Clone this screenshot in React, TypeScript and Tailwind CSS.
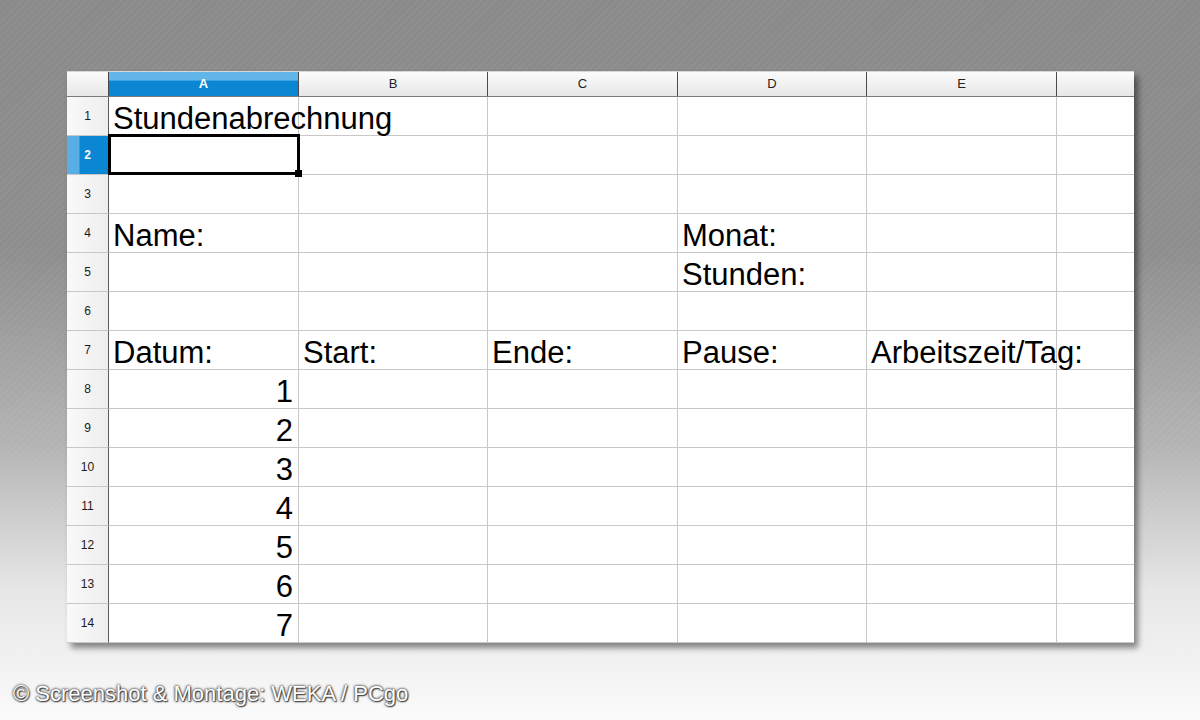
import React from 'react'

const COLS = ['A', 'B', 'C', 'D', 'E', '']

type Cell = { text: string; align?: 'left' | 'right'; overflow?: boolean }

const DATA: Record<number, Record<number, Cell>> = {
  1: { 0: { text: 'Stundenabrechnung', overflow: true } },
  4: { 0: { text: 'Name:' }, 3: { text: 'Monat:' } },
  5: { 3: { text: 'Stunden:' } },
  7: {
    0: { text: 'Datum:' },
    1: { text: 'Start:' },
    2: { text: 'Ende:' },
    3: { text: 'Pause:' },
    4: { text: 'Arbeitszeit/Tag:', overflow: true },
  },
  8: { 0: { text: '1', align: 'right' } },
  9: { 0: { text: '2', align: 'right' } },
  10: { 0: { text: '3', align: 'right' } },
  11: { 0: { text: '4', align: 'right' } },
  12: { 0: { text: '5', align: 'right' } },
  13: { 0: { text: '6', align: 'right' } },
  14: { 0: { text: '7', align: 'right' } },
}

const ROWS = Array.from({ length: 14 }, (_, i) => i + 1)

function ColHeader({ label, index }: { label: string; index: number }) {
  if (index === 0) {
    return (
      <div className="h-[24px] flex items-center justify-center border-r border-[#4a4a4a] bg-[linear-gradient(to_bottom,#63b6ea_0%,#63b6ea_35%,#0a86d3_36%,#0a86d3_100%)] text-[13px] font-bold text-white">
        {label}
      </div>
    )
  }
  return (
    <div
      className={
        'h-[24px] flex items-center justify-center bg-[linear-gradient(to_bottom,#fbfbfb,#e7e7e7)] text-[13px] text-[#222] ' +
        (index < 5 ? 'border-r border-[#4a4a4a]' : '')
      }
    >
      {label}
    </div>
  )
}

function RowHeader({ n }: { n: number }) {
  const active = n === 2
  return (
    <div
      className={
        'h-[39px] flex items-center justify-center border-b border-r text-[12px] ' +
        (active
          ? 'border-[#c8c8c8] border-r-[#5a5a5a] bg-[linear-gradient(to_right,#5aaee6_0%,#5aaee6_30%,#0a86d3_31%,#0a86d3_100%)] text-white font-bold'
          : 'border-[#c8c8c8] border-r-[#5a5a5a] bg-[linear-gradient(to_right,#f9f9f9,#eeeeee)] text-[#1a1a1a]')
      }
    >
      {n}
    </div>
  )
}

export default function App() {
  return (
    <div
      className="w-[1200px] h-[720px] flex flex-col overflow-hidden bg-[repeating-linear-gradient(135deg,rgba(255,255,255,0.035)_0px,rgba(255,255,255,0.035)_2px,transparent_2px,transparent_5px),linear-gradient(to_bottom,#8a8a8a_0%,#8e8e8e_35%,#b4b4b4_62%,#e6e6e6_82%,#fbfbfb_100%)]"
      style={{ fontFamily: '"Liberation Sans", Arial, sans-serif' }}
    >
      <div className="ml-[67px] mt-[71px] w-[1067px] bg-white border-t border-[#d6d6d6] shadow-[4px_5px_6px_rgba(0,0,0,0.45)]">
        <div className="grid grid-cols-[42px_190px_189px_190px_189px_190px_77px]">
          <div className="h-[24px] border-r border-[#4a4a4a] bg-[linear-gradient(to_bottom,#fbfbfb,#e7e7e7)]" />
          {COLS.map((c, i) => (
            <ColHeader key={i} label={c} index={i} />
          ))}
          <div className="col-span-7 h-px bg-[#7a7a7a]" />
          {ROWS.map((r) => (
            <React.Fragment key={r}>
              <RowHeader n={r} />
              {COLS.map((_, ci) => {
                const cell = DATA[r]?.[ci]
                const selected = r === 2 && ci === 0
                return (
                  <div
                    key={ci}
                    className={
                      'relative h-[39px] flex items-end border-b border-[#c8c8c8] pl-1 pr-[5px] pb-[1px] ' +
                      (ci < 5 ? 'border-r ' : '') +
                      (cell?.align === 'right' ? 'justify-end ' : '') +
                      (cell?.overflow ? 'z-10 ' : '') +
                      (selected ? 'z-20 ' : '')
                    }
                  >
                    {cell && (
                      <span className="whitespace-nowrap text-[31px] leading-none text-black">
                        {cell.text}
                      </span>
                    )}
                    {selected && (
                      <div className="absolute -left-px -top-[2px] -right-[2px] -bottom-px border-[3px] border-black">
                        <div className="absolute -right-[5px] -bottom-[5px] w-[7px] h-[7px] bg-black" />
                      </div>
                    )}
                  </div>
                )
              })}
            </React.Fragment>
          ))}
        </div>
      </div>
      <div className="mt-auto mb-[10px] ml-[13px] text-[22px] text-white [text-shadow:0_0_3px_#2a2a2a,0_0_2px_#444,1px_1px_1px_#555]">
        © Screenshot &amp; Montage: WEKA / PCgo
      </div>
    </div>
  )
}
